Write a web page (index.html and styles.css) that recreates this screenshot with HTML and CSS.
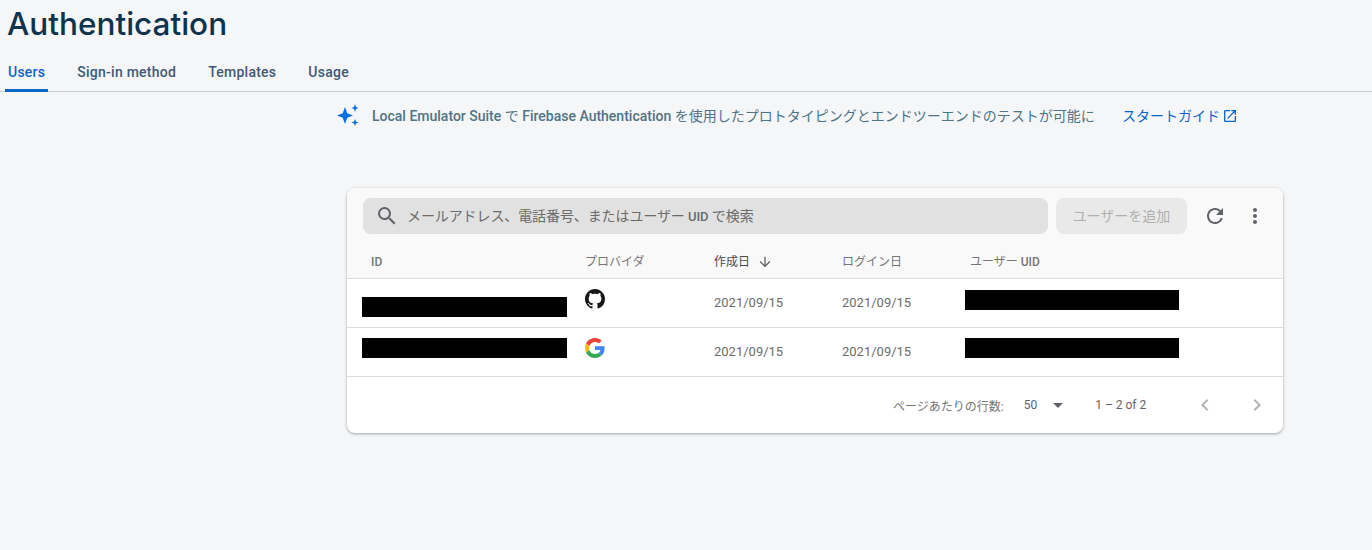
FILE: index.html
```html
<!DOCTYPE html>
<html lang="ja">
  <head>
    <meta charset="UTF-8" />
    <meta name="viewport" content="width=device-width, initial-scale=1.0" />
    <title>Authentication</title>
    <link rel="stylesheet" href="styles.css">
  </head>
  <body>
    <h1 class="page-title">Authentication</h1>

    <nav class="tabs">
      <a class="tab active">Users</a>
      <a class="tab">Sign-in method</a>
      <a class="tab">Templates</a>
      <a class="tab">Usage</a>
    </nav>

    <div class="promo">
      <svg class="promo-icon" viewBox="0 0 24 24" width="24" height="24">
        <path d="M9 4 11.300 10.200 17 12.500 11.300 14.800 9 21 6.700 14.800 1 12.500 6.700 10.200z" />
        <path d="M19 1 20 4 22.500 5 20 6 19 9 18 6 15.500 5 18 4z" />
        <path d="M19 16 20 18.500 22.500 19.500 20 20.500 19 23 18 20.500 15.500 19.500 18 18.500z" />
      </svg>
      <p class="promo-text"><b>Local Emulator Suite</b> で <b>Firebase Authentication</b> を使用したプロトタイピングとエンドツーエンドのテストが可能に</p>
      <a class="promo-link">スタートガイド
        <svg viewBox="0 0 24 24" width="16" height="16">
          <path d="M19 19H5V5h7V3H5a2 2 0 0 0-2 2v14a2 2 0 0 0 2 2h14a2 2 0 0 0 2-2v-7h-2v7zM14 3v2h3.590l-9.830 9.830 1.410 1.410L19 6.410V10h2V3h-7z" />
        </svg>
      </a>
    </div>

    <section class="card">
      <div class="toolbar">
        <div class="search">
          <svg viewBox="0 0 24 24" width="24" height="24">
            <path d="M15.500 14h-.79l-.28-.27A6.470 6.470 0 0 0 16 9.500 6.500 6.500 0 1 0 9.500 16c1.610 0 3.090-.59 4.230-1.570l.27.28v.79l5 4.990L20.490 19l-4.990-5zm-6 0C7.010 14 5 11.990 5 9.500S7.010 5 9.500 5 14 7.010 14 9.500 11.990 14 9.500 14z" />
          </svg>
          <span>メールアドレス、電話番号、またはユーザー <b>UID</b> で検索</span>
        </div>
        <button class="add-user" disabled>ユーザーを追加</button>
        <svg class="tool-icon" viewBox="0 0 24 24" width="24" height="24">
          <path d="M17.650 6.350A7.958 7.958 0 0 0 12 4c-4.420 0-7.990 3.580-7.990 8s3.570 8 7.990 8c3.730 0 6.840-2.550 7.730-6h-2.080A5.990 5.990 0 0 1 12 18c-3.310 0-6-2.690-6-6s2.690-6 6-6c1.660 0 3.140.69 4.220 1.780L13 11h7V4l-2.350 2.350z" />
        </svg>
        <svg class="tool-icon" viewBox="0 0 24 24" width="24" height="24">
          <path d="M12 8c1.100 0 2-.9 2-2s-.9-2-2-2-2 .9-2 2 .9 2 2 2zm0 2c-1.100 0-2 .9-2 2s.9 2 2 2 2-.9 2-2-.9-2-2-2zm0 6c-1.100 0-2 .9-2 2s.9 2 2 2 2-.9 2-2-.9-2-2-2z" />
        </svg>
      </div>

      <div class="row head">
        <div class="col-id"><b>ID</b></div>
        <div>プロバイダ</div>
        <div class="sorted">作成日
          <svg viewBox="0 0 24 24" width="16" height="16">
            <path d="M20 12l-1.410-1.410L13 16.170V4h-2v12.170l-5.580-5.590L4 12l8 8 8-8z" />
          </svg>
        </div>
        <div>ログイン日</div>
        <div>ユーザー <b>UID</b></div>
      </div>

      <div class="row user">
        <div class="redact redact-id low"></div>
        <svg class="provider" viewBox="0 0 16 16" width="20" height="20">
          <path fill="#181717" d="M8 0C3.580 0 0 3.580 0 8c0 3.540 2.290 6.530 5.470 7.590.4.070.55-.17.550-.38 0-.19-.01-.82-.01-1.490-2.010.37-2.530-.49-2.690-.94-.09-.23-.48-.94-.82-1.130-.28-.15-.68-.52-.01-.53.630-.01 1.080.58 1.230.82.720 1.210 1.870.87 2.330.66.070-.52.280-.87.510-1.070-1.780-.2-3.640-.89-3.640-3.950 0-.87.310-1.590.820-2.150-.08-.2-.36-1.020.08-2.120 0 0 .67-.21 2.200.82.640-.18 1.320-.27 2-.27s1.360.09 2 .27c1.530-1.040 2.200-.82 2.200-.82.440 1.100.16 1.920.08 2.120.51.560.82 1.270.82 2.150 0 3.070-1.870 3.750-3.650 3.950.29.250.54.730.54 1.480 0 1.070-.01 1.930-.01 2.200 0 .21.150.46.550.38A8.010 8.010 0 0 0 16 8c0-4.420-3.580-8-8-8z" />
        </svg>
        <div class="date">2021/09/15</div>
        <div class="date">2021/09/15</div>
        <div class="redact redact-uid first"></div>
      </div>

      <div class="row user">
        <div class="redact redact-id"></div>
        <svg class="provider" viewBox="0 0 48 48" width="20" height="20">
          <path fill="#EA4335" d="M24 9.500c3.540 0 6.710 1.220 9.210 3.600l6.850-6.850C35.900 2.380 30.470 0 24 0 14.620 0 6.510 5.380 2.560 13.220l7.980 6.190C12.430 13.720 17.740 9.500 24 9.500z" />
          <path fill="#4285F4" d="M46.980 24.550c0-1.570-.15-3.090-.38-4.550H24v9.020h12.940c-.58 2.960-2.260 5.480-4.780 7.180l7.730 6c4.510-4.180 7.090-10.360 7.090-17.650z" />
          <path fill="#FBBC05" d="M10.530 28.590c-.48-1.450-.76-2.990-.76-4.590s.27-3.140.76-4.590l-7.980-6.190C.92 16.460 0 20.120 0 24c0 3.880.92 7.540 2.560 10.780l7.970-6.190z" />
          <path fill="#34A853" d="M24 48c6.480 0 11.930-2.130 15.890-5.810l-7.730-6c-2.150 1.450-4.920 2.300-8.160 2.300-6.260 0-11.570-4.220-13.470-9.910l-7.980 6.190C6.510 42.620 14.620 48 24 48z" />
        </svg>
        <div class="date">2021/09/15</div>
        <div class="date">2021/09/15</div>
        <div class="redact redact-uid"></div>
      </div>

      <div class="pager">
        <span class="per-page">ページあたりの行数:</span>
        <span class="page-size">50</span>
        <span class="caret"></span>
        <span class="range">1 – 2 of 2</span>
        <svg class="page-btn" viewBox="0 0 24 24" width="24" height="24">
          <path d="M15.410 7.410 14 6l-6 6 6 6 1.410-1.410L10.830 12z" />
        </svg>
        <svg class="page-btn" viewBox="0 0 24 24" width="24" height="24">
          <path d="M10 6 8.590 7.410 13.170 12l-4.580 4.590L10 18l6-6z" />
        </svg>
      </div>
    </section>
  </body>
</html>
```

FILE: styles.css
```css
body {
  font-family: Roboto, "Noto Sans CJK JP", sans-serif;
  margin: 0;
  height: 550px;
  overflow: hidden;
  background: #f5f6f8;
  color: #5f6368;
}
.page-title {
  margin: 0;
  padding: 5px 0 0 7px;
  height: 45px;
  font-family: Inter, Roboto, sans-serif;
  font-size: 31.500px;
  line-height: 38px;
  font-weight: 500;
  color: #0f334d;
}
.tabs {
  display: flex;
  height: 41px;
  padding-left: 5px;
  border-bottom: 1px solid #c1ccd6;
}
.tab {
  padding: 0 3px;
  margin-right: 26px;
  font-size: 14px;
  font-weight: 500;
  line-height: 44px;
  color: #3d5a78;
  letter-spacing: .25px;
}
.tab.active {
  color: #0b66c9;
  border-bottom: 3px solid #0b66c9;
  height: 39px;
  margin-bottom: -1px;
}
.promo {
  display: flex;
  align-items: center;
  height: 24px;
  margin-top: 11px;
  padding-left: 336px;
  font-size: 14px;
  color: #4f7485;
}
.promo-icon {
  fill: #0b6fe0;
  flex: none;
}
.promo-text {
  margin: 0 0 0 12px;
  width: 750px;
  white-space: nowrap;
}
.promo-text b {
  font-weight: 500;
}
.promo-link {
  display: flex;
  align-items: center;
  font-size: 14px;
  color: #0b66c9;
  white-space: nowrap;
}
.promo-link svg {
  fill: #0b66c9;
  margin: 2px 0 0 2px;
}
.card {
  width: 936px;
  margin: 61px 0 0 347px;
  background: #fff;
  border-radius: 8px;
  box-shadow: 0 1px 3px rgba(0, 0, 0, .35);
  overflow: hidden;
}
.toolbar {
  display: flex;
  align-items: center;
  height: 56px;
  padding: 0 16px;
  background: #f9f9f9;
}
.search {
  display: flex;
  align-items: center;
  flex: none;
  width: 685px;
  height: 36px;
  padding-left: 12px;
  box-sizing: border-box;
  background: #e1e1e1;
  border-radius: 8px;
  font-size: 14px;
  color: #6b6b6b;
}
.search svg {
  fill: #5f6368;
  margin: 0 8px 1px 0;
}
.search span {
  margin-bottom: 2px;
  letter-spacing: -.1px;
}
.search b {
  font-weight: 500;
  font-size: 13px;
}
.add-user {
  flex: none;
  width: 131px;
  height: 36px;
  margin-left: 8px;
  padding-bottom: 3px;
  border: none;
  border-radius: 8px;
  background: #e9e9e9;
  color: #b0b0b0;
  font-family: inherit;
  font-size: 14px;
}
.tool-icon {
  flex: none;
  fill: #5f6368;
  margin-left: 16px;
}
.row {
  display: grid;
  grid-template-columns: 238px 129px 128px 128px 1fr;
  border-bottom: 1px solid #dcdcdc;
}
.head {
  height: 34px;
  background: #f9f9f9;
  font-size: 12px;
  line-height: 36px;
  color: #757575;
}
.head b {
  font-weight: 500;
}
.col-id {
  padding-left: 24px;
}
.sorted {
  display: flex;
  align-items: center;
  color: #4a4a4a;
}
.sorted svg {
  fill: #5f6368;
  margin-left: 7px;
}
.user {
  height: 48px;
}
.redact {
  background: #000;
  height: 20px;
  margin-top: 10px;
}
.redact-id {
  width: 205px;
  margin-left: 15px;
}
.redact-id.low {
  margin-top: 18px;
}
.redact-uid {
  width: 214px;
  margin-left: -5px;
}
.redact-uid.first {
  margin-top: 11px;
}
.provider {
  margin-top: 10px;
}
.date {
  font-size: 13px;
  line-height: 47px;
  color: #6b6b6b;
}
.pager {
  display: flex;
  align-items: center;
  height: 56px;
  font-size: 12px;
  color: #757575;
}
.per-page {
  margin-left: 546px;
}
.page-size {
  margin-left: 20px;
  color: #5f6368;
}
.caret {
  margin-left: 16px;
  border-left: 5px solid transparent;
  border-right: 5px solid transparent;
  border-top: 5px solid #5f6368;
}
.range {
  margin-left: 32px;
  color: #5f6368;
}
.page-btn {
  fill: #b5b5b5;
  margin-left: 28px;
}
.range + .page-btn {
  margin-left: 47px;
}
```
